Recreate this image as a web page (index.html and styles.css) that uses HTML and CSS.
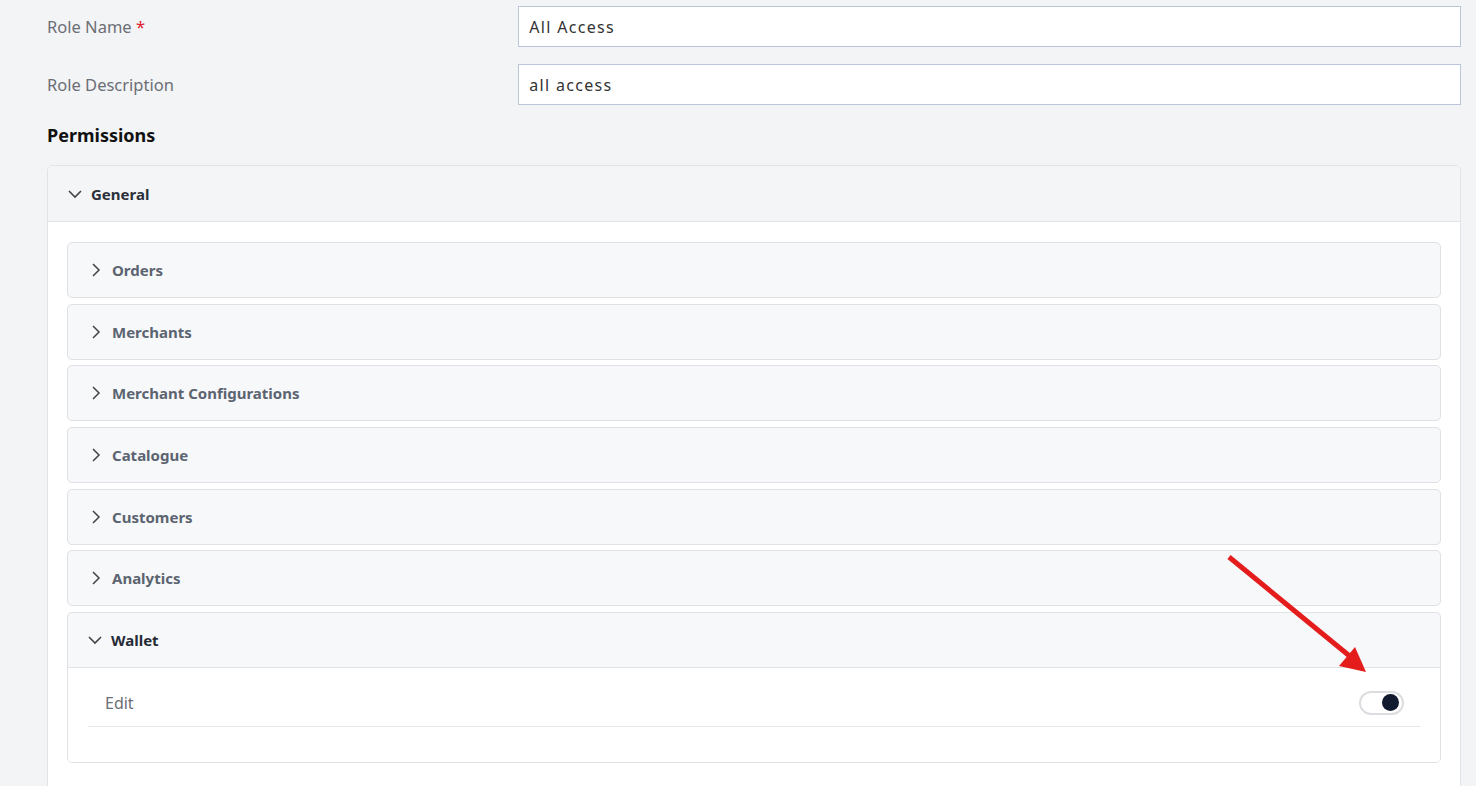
FILE: index.html
```html
<!DOCTYPE html>
<html lang="en">

<head>
    <meta charset="UTF-8">
    <meta name="viewport" content="width=device-width, initial-scale=1.0">
    <title>Edit Role</title>
    <link rel="stylesheet" href="styles.css">
</head>

<body>
    <div class="role-page">
        <div class="form-row">
            <label class="form-label">Role Name <span class="required">*</span></label>
            <input class="form-input" type="text" value="All Access">
        </div>
        <div class="form-row">
            <label class="form-label">Role Description</label>
            <input class="form-input" type="text" value="all access">
        </div>

        <h3 class="section-title">Permissions</h3>

        <div class="perm-group">
            <div class="perm-group-header">
                <svg class="chevron" width="14" height="14" viewBox="0 0 14 14"><path d="M1 4l6 6 6-6" fill="none" stroke="currentColor" stroke-width="1.6"/></svg>
                <span>General</span>
            </div>
            <div class="perm-group-body">
                <div class="perm-item">
                    <div class="perm-item-header">
                        <svg class="chevron" width="12" height="16" viewBox="0 0 12 16"><path d="M3 2l6 6-6 6" fill="none" stroke="currentColor" stroke-width="1.5"/></svg>
                        <span>Orders</span>
                    </div>
                </div>
                <div class="perm-item">
                    <div class="perm-item-header">
                        <svg class="chevron" width="12" height="16" viewBox="0 0 12 16"><path d="M3 2l6 6-6 6" fill="none" stroke="currentColor" stroke-width="1.5"/></svg>
                        <span>Merchants</span>
                    </div>
                </div>
                <div class="perm-item">
                    <div class="perm-item-header">
                        <svg class="chevron" width="12" height="16" viewBox="0 0 12 16"><path d="M3 2l6 6-6 6" fill="none" stroke="currentColor" stroke-width="1.5"/></svg>
                        <span>Merchant Configurations</span>
                    </div>
                </div>
                <div class="perm-item">
                    <div class="perm-item-header">
                        <svg class="chevron" width="12" height="16" viewBox="0 0 12 16"><path d="M3 2l6 6-6 6" fill="none" stroke="currentColor" stroke-width="1.5"/></svg>
                        <span>Catalogue</span>
                    </div>
                </div>
                <div class="perm-item">
                    <div class="perm-item-header">
                        <svg class="chevron" width="12" height="16" viewBox="0 0 12 16"><path d="M3 2l6 6-6 6" fill="none" stroke="currentColor" stroke-width="1.5"/></svg>
                        <span>Customers</span>
                    </div>
                </div>
                <div class="perm-item">
                    <div class="perm-item-header">
                        <svg class="chevron" width="12" height="16" viewBox="0 0 12 16"><path d="M3 2l6 6-6 6" fill="none" stroke="currentColor" stroke-width="1.5"/></svg>
                        <span>Analytics</span>
                    </div>
                </div>
                <div class="perm-item open">
                    <div class="perm-item-header">
                        <svg class="chevron" width="14" height="14" viewBox="0 0 14 14"><path d="M1 4l6 6 6-6" fill="none" stroke="currentColor" stroke-width="1.6"/></svg>
                        <span>Wallet</span>
                    </div>
                    <div class="perm-item-body">
                        <div class="perm-row">
                            <span>Edit</span>
                            <span class="toggle on"><span class="toggle-knob"></span></span>
                        </div>
                    </div>
                </div>
            </div>
        </div>
    </div>

    <!-- annotation arrow -->
    <svg class="annotation" width="1476" height="786" viewBox="0 0 1476 786">
        <line x1="1229" y1="557" x2="1352" y2="658" stroke="#e41c1c" stroke-width="5"/>
        <polygon points="1366,672 1339,666 1355,647" fill="#e41c1c"/>
    </svg>
</body>

</html>
```

FILE: styles.css
```css
body {
    margin: 0;
    background: #f3f4f6;
    font-family: "Noto Sans", "Open Sans", sans-serif;
    color: #333;
}

.role-page {
    padding: 6px 15px 0 47px;
}

.form-row {
    display: grid;
    grid-template-columns: 1fr 2fr;
    align-items: center;
    margin-bottom: 17px;
}

.form-label {
    font-size: 16.5px;
    color: #6b6e75;
}

.required {
    color: #e0202e;
}

.form-input {
    height: 41px;
    box-sizing: border-box;
    border: 1px solid #bcc6da;
    background: white;
    padding: 0 10px;
    font-family: inherit;
    font-size: 16px;
    letter-spacing: 1.3px;
    color: #333;
    outline: none;
}

.section-title {
    margin: 0 0 18px;
    padding-top: 1px;
    font-size: 18px;
    font-weight: 700;
    color: #111;
}

.perm-group {
    border: 1px solid #e1e3e7;
    border-radius: 6px;
    background: white;
    overflow: hidden;
}

.perm-group-header {
    height: 55px;
    display: flex;
    align-items: center;
    gap: 9px;
    padding-left: 20px;
    background: #f4f5f7;
    border-bottom: 1px solid #e1e3e7;
    font-size: 15px;
    font-weight: 700;
    color: #2b303a;
}

.perm-group-body {
    padding: 20px 19px 40px;
    display: flex;
    flex-direction: column;
    gap: 5.67px;
}

.perm-item {
    border: 1px solid #dfe1e5;
    border-radius: 5px;
    background: #f7f8fa;
    overflow: hidden;
}

.perm-item-header {
    height: 54px;
    display: flex;
    align-items: center;
    gap: 10px;
    padding-left: 22px;
    font-size: 15px;
    font-weight: 700;
    color: #5b6470;
}

.perm-item.open .perm-item-header {
    padding-left: 20px;
    gap: 9px;
    color: #262b35;
    border-bottom: 1px solid #e1e3e7;
}

.chevron {
    color: #444;
    flex-shrink: 0;
}

.perm-item-body {
    background: white;
    padding: 12px 20px 35px;
}

.perm-row {
    height: 46px;
    display: flex;
    align-items: center;
    justify-content: space-between;
    padding: 0 16px 0 17px;
    border-bottom: 1px solid #e6e7ea;
    font-size: 16px;
    color: #6b6e75;
}

.toggle {
    width: 45px;
    height: 24px;
    box-sizing: border-box;
    border: 2px solid #dcdde0;
    border-radius: 12px;
    background: white;
    display: flex;
    align-items: center;
    justify-content: flex-end;
    padding-right: 3px;
}

.toggle-knob {
    width: 17px;
    height: 17px;
    border-radius: 50%;
    background: #111a2e;
}

.annotation {
    position: absolute;
    top: 0;
    left: 0;
    pointer-events: none;
}
```
